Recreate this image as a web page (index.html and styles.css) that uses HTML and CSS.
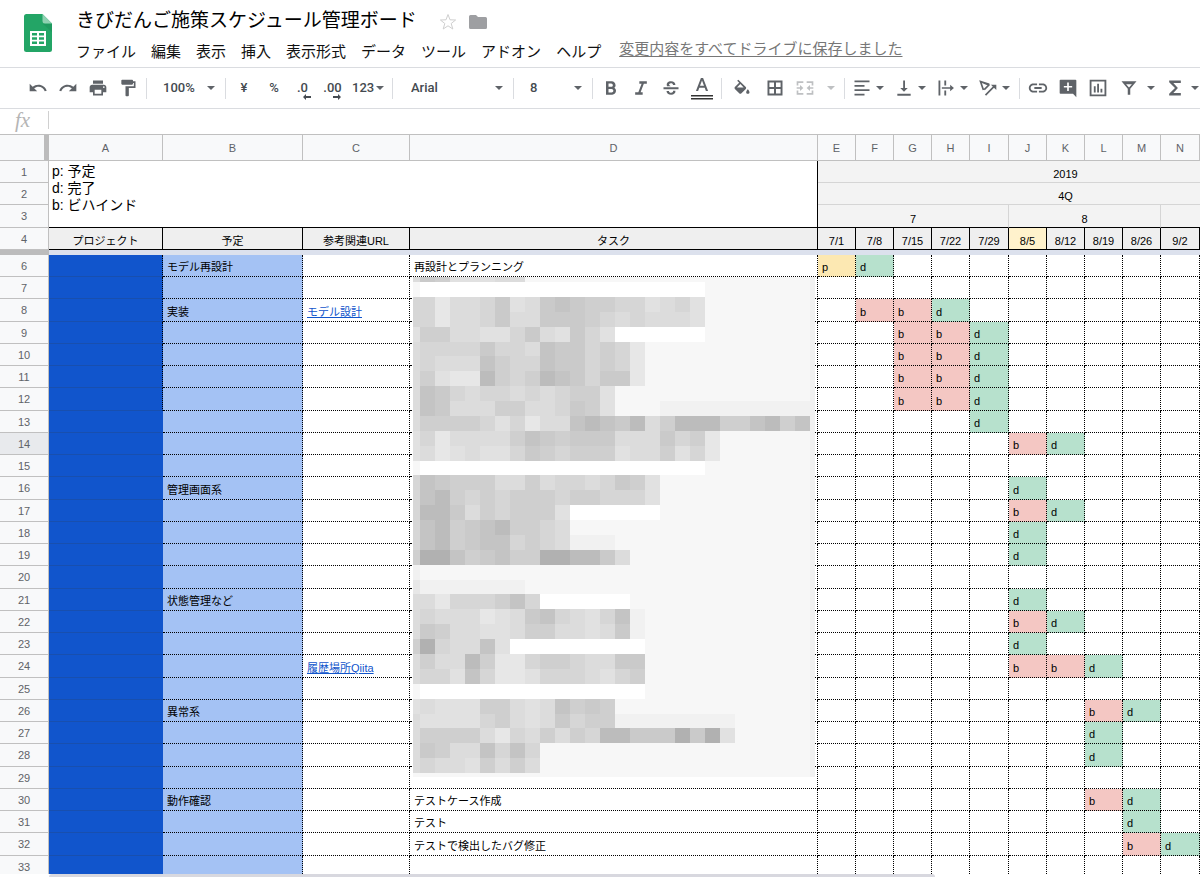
FILE: index.html
```html
<!DOCTYPE html>
<html lang="ja">
<head>
<meta charset="utf-8">
<title>きびだんご施策スケジュール管理ボード</title>
<link rel="stylesheet" href="styles.css">
</head>
<body>
<header class="header">
  <svg class="logo" viewBox="0 0 28 38" aria-hidden="true">
    <path fill="#23a566" d="M2.500 0H18.500L28 9.500V35.500A2.500 2.500 0 0 1 25.500 38H2.500A2.500 2.500 0 0 1 0 35.500V2.500A2.500 2.500 0 0 1 2.500 0z"/>
    <path fill="#1c8f57" d="M19 10l9 8V9.500z" opacity=".5"/>
    <path fill="#8ed1b1" d="M18.500 0L28 9.500H21A2.500 2.500 0 0 1 18.500 7z"/>
    <path fill="#fff" fill-rule="evenodd" d="M6 17H22V32H6zM8 19v2.500h5V19zM15 19v2.500h5V19zM8 23.300v2.500h5v-2.500zM15 23.300v2.500h5v-2.500zM8 27.600v2.500h5v-2.500zM15 27.600v2.500h5v-2.500z"/>
  </svg>
  <div class="heading">
    <div class="title-row">
      <h1 class="title">きびだんご施策スケジュール管理ボード</h1>
      <button class="title-button" aria-label="スター"><svg width="18" height="18" viewBox="0 0 18 18"><path fill="none" stroke="#cfcfcf" d="M9 1.500l2 5.300 5.600.2-4.400 3.500 1.600 5.500L9 12.800 4.200 16l1.600-5.500L1.400 7 7 6.800z"/></svg></button>
      <button class="title-button" aria-label="フォルダ"><svg width="18" height="16" viewBox="0 0 18 16"><path fill="#9e9fa2" d="M1.500 1H7l2 2h7.500A1.500 1.500 0 0 1 18 4.500v9a1.500 1.500 0 0 1-1.500 1.500h-15A1.500 1.500 0 0 1 0 13.500v-11A1.500 1.500 0 0 1 1.500 1z"/></svg></button>
    </div>
    <nav class="menu">
      <button>ファイル</button><button>編集</button><button>表示</button><button>挿入</button><button>表示形式</button><button>データ</button><button>ツール</button><button>アドオン</button><button>ヘルプ</button>
      <a class="saved" href="#">変更内容をすべてドライブに保存しました</a>
    </nav>
  </div>
</header>

<div class="toolbar" role="toolbar">
  <button class="tool" aria-label="元に戻す"><svg class="icon" viewBox="0 0 24 24"><path d="M12.500 8c-2.650 0-5.050.990-6.900 2.600L2 7v9h9l-3.620-3.620c1.390-1.160 3.160-1.880 5.120-1.880 3.540 0 6.550 2.310 7.600 5.500l2.370-.780C21.080 11.030 17.150 8 12.500 8z"/></svg></button>
  <button class="tool" aria-label="やり直し"><svg class="icon" viewBox="0 0 24 24"><path d="M18.400 10.600C16.550 8.990 14.150 8 11.500 8c-4.650 0-8.580 3.030-9.960 7.220L3.900 16c1.050-3.190 4.050-5.500 7.600-5.500 1.950 0 3.730.720 5.120 1.880L13 16h9V7l-3.600 3.600z"/></svg></button>
  <button class="tool" aria-label="印刷"><svg class="icon" viewBox="0 0 24 24"><path d="M19 8H5c-1.660 0-3 1.340-3 3v6h4v4h12v-4h4v-6c0-1.660-1.340-3-3-3zm-3 11H8v-5h8v5zm3-7c-.550 0-1-.450-1-1s.450-1 1-1 1 .450 1 1-.450 1-1 1zm-1-9H6v4h12V3z"/></svg></button>
  <button class="tool" aria-label="書式を貼り付け"><svg class="icon" viewBox="0 0 24 24"><path d="M18 4V3c0-.550-.450-1-1-1H5c-.550 0-1 .450-1 1v4c0 .550.450 1 1 1h12c.550 0 1-.450 1-1V6h1v4H9v11c0 .550.450 1 1 1h2c.550 0 1-.450 1-1v-9h8V4h-3z"/></svg></button>
  <span class="sep"></span>
  <span class="picker"><select aria-label="ズーム"><option>100%</option></select><svg class="arrow" viewBox="0 0 8 4"><path d="M0 0h8L4 4z"/></svg></span>
  <span class="sep"></span>
  <button class="tool">¥</button>
  <button class="tool">%</button>
  <button class="tool decimals">.0<svg viewBox="0 0 8 6"><path d="M3 0v2h5v2H3v2L0 3z"/></svg></button>
  <button class="tool decimals">.00<svg viewBox="0 0 8 6"><path d="M5 0v2H0v2h5v2l3-3z"/></svg></button>
  <button class="tool combo number-format">123<svg class="arrow" viewBox="0 0 8 4"><path d="M0 0h8L4 4z"/></svg></button>
  <span class="sep"></span>
  <span class="picker picker-font"><select aria-label="フォント"><option>Arial</option></select><svg class="arrow" viewBox="0 0 8 4"><path d="M0 0h8L4 4z"/></svg></span>
  <span class="sep"></span>
  <span class="picker"><select aria-label="フォントサイズ"><option>8</option></select><svg class="arrow" viewBox="0 0 8 4"><path d="M0 0h8L4 4z"/></svg></span>
  <span class="sep"></span>
  <button class="tool" aria-label="太字"><svg class="icon" viewBox="0 0 24 24"><path d="M15.800 11.800c1-.7 1.700-1.800 1.700-2.900C17.500 6.200 15.500 4 12.800 4H6v16h7.500c2.500 0 4.500-2.100 4.500-4.600 0-1.600-.9-2.900-2.200-3.600zM9 6.600h3.200c1.100 0 2 .9 2 2s-.9 2-2 2H9zm3.700 10.800H9v-4.200h3.700c1.200 0 2.100.9 2.100 2.100s-.9 2.100-2.100 2.100z"/></svg></button>
  <button class="tool" aria-label="斜体"><svg class="icon" viewBox="0 0 24 24"><path d="M10 4v3h2.700l-3.900 10H5v3h9v-3h-2.500l3.900-10H19V4z"/></svg></button>
  <button class="tool" aria-label="取り消し線"><svg class="icon" viewBox="0 0 24 24"><path d="M3 11h18v2.500H3zM7.200 9.800C6 6.200 8.500 4 12 4c3.200 0 5.300 1.800 5.300 4.500h-2.900C14.400 7.200 13.500 6.400 12 6.400c-2 0-3 1.200-1.900 2.400l1.500 1zM6.600 15.500h2.900c0 1.400 1.100 2.200 2.600 2.200 1.900 0 2.700-1 2.300-2.300H17.300C17.700 18.300 15.500 20.100 12.200 20.100c-3.200 0-5.600-1.700-5.600-4.600z"/></svg></button>
  <button class="tool text-color" aria-label="テキストの色"><svg width="22" height="26" viewBox="0 0 22 26"><path fill="#5f6368" d="M9.900 3h2.200l5 13h-2.200l-1.200-3.300H8.300L7.100 16H4.900zM9 10.800h4L11 5.400z"/><path fill="#333" d="M0 20h22v1.500H0zM0 23h22v1.500H0z"/></svg></button>
  <span class="sep"></span>
  <button class="tool fill-color" aria-label="塗りつぶしの色"><svg class="icon" viewBox="0 0 24 24"><path d="M16.560 8.940L7.620 0 6.210 1.410l2.380 2.380-5.150 5.150c-.590.590-.590 1.540 0 2.120l5.500 5.500c.290.290.680.440 1.060.440s.770-.150 1.060-.440l5.500-5.500c.590-.580.590-1.530 0-2.120zM6 9.500L10 5.300 14 9.500zM19 11.500s-2 2.170-2 3.500c0 1.100.9 2 2 2s2-.9 2-2c0-1.330-2-3.500-2-3.500z" transform="translate(0 2)"/></svg></button>
  <button class="tool borders" aria-label="枠線"><svg class="icon" viewBox="0 0 24 24"><path fill-rule="evenodd" d="M3 3h18v18H3zM5.300 5.300v5.500h5.500V5.300zM13.200 5.300v5.500h5.500V5.300zM5.300 13.200v5.500h5.500v-5.500zM13.200 13.200v5.500h5.500v-5.500z"/></svg></button>
  <button class="tool combo merge" aria-label="セルを結合"><svg class="icon" viewBox="0 0 24 24"><path d="M2 4h8v2H4v3H2zM14 4h8v5h-2V6h-6zM2 15h2v3h6v2H2zM20 15h2v5h-8v-2h6zM2 11h4V8.500l4 3.500-4 3.500V13H2zM22 11h-4V8.500L14 12l4 3.500V13h4z"/></svg><svg class="arrow" viewBox="0 0 8 4"><path d="M0 0h8L4 4z"/></svg></button>
  <span class="sep"></span>
  <button class="tool combo" aria-label="水平方向の配置"><svg class="icon" viewBox="0 0 24 24"><path d="M3 3h18v2.200H3zM3 8.300h12v2.200H3zM3 13.500h18v2.200H3zM3 18.800h12V21H3z"/></svg><svg class="arrow" viewBox="0 0 8 4"><path d="M0 0h8L4 4z"/></svg></button>
  <button class="tool combo" aria-label="垂直方向の配置"><svg class="icon" viewBox="0 0 24 24"><path d="M4 19h16v2.200H4zM11 3h2.200v9h3.300L12 16.500 7.500 12H11z"/></svg><svg class="arrow" viewBox="0 0 8 4"><path d="M0 0h8L4 4z"/></svg></button>
  <button class="tool combo" aria-label="テキストの折り返し"><svg class="icon" viewBox="0 0 24 24"><path d="M3 3h2.200v18H3zM10 3h2.200v6H10zM10 15h2.200v6H10zM7 11h10V8l4.500 4-4.500 4v-3H7z"/></svg><svg class="arrow" viewBox="0 0 8 4"><path d="M0 0h8L4 4z"/></svg></button>
  <button class="tool combo" aria-label="テキストの回転"><svg class="icon" viewBox="0 0 24 24"><path fill="none" stroke="#5f6368" stroke-width="2" d="M6.500 14.500L3 4.200 13.500 7.500M3 4.200L13 8.500 7.500 14M9 20.500L20 9.500"/><path d="M15.500 8H22v6.500z"/></svg><svg class="arrow" viewBox="0 0 8 4"><path d="M0 0h8L4 4z"/></svg></button>
  <span class="sep"></span>
  <button class="tool" aria-label="リンクを挿入"><svg class="icon link-icon" viewBox="0 0 24 24"><path d="M3.900 12c0-1.710 1.390-3.100 3.100-3.100h4V7H7c-2.760 0-5 2.240-5 5s2.240 5 5 5h4v-1.900H7c-1.710 0-3.100-1.390-3.100-3.100zM8 13h8v-2H8v2zm9-6h-4v1.900h4c1.710 0 3.100 1.390 3.100 3.100s-1.390 3.100-3.100 3.100h-4V17h4c2.760 0 5-2.240 5-5s-2.240-5-5-5z"/></svg></button>
  <button class="tool" aria-label="コメントを挿入"><svg class="icon" viewBox="0 0 24 24"><path d="M22 3c0-.6-.4-1-1-1H3c-.6 0-1 .4-1 1v15c0 .6.400 1 1 1h15l4 4V3zm-5 8.500h-4v4h-2v-4H7v-2h4v-4h2v4h4z"/></svg></button>
  <button class="tool" aria-label="グラフを挿入"><svg class="icon" viewBox="0 0 24 24"><path fill-rule="evenodd" d="M2 2h20v20H2zM4.200 4.200v15.600h15.600V4.200zM7 10h2.200v7.500H7zM11 7h2.200v10.500H11zM15 13h2.200v4.500H15z"/></svg></button>
  <button class="tool combo filter" aria-label="フィルタ"><svg class="icon" viewBox="0 0 24 24"><path fill-rule="evenodd" d="M3 4h18l-7.500 9v7h-3v-7zM8.500 7.500L12 11.500l3.500-4z"/></svg><svg class="arrow" viewBox="0 0 8 4"><path d="M0 0h8L4 4z"/></svg></button>
  <button class="tool combo sigma" aria-label="関数"><svg class="icon" viewBox="0 0 24 24"><path d="M19 3H5v2l7 7-7 7v2h14v-3H10l5.500-6L10 6h9z"/></svg><svg class="arrow" viewBox="0 0 8 4"><path d="M0 0h8L4 4z"/></svg></button>
</div>

<div class="formula-bar">
  <label class="fx" for="formula">fx</label>
  <input id="formula" class="formula" type="text">
</div>

<main class="sheet">
  <table class="grid">
    <colgroup>
      <col class="col-head"><col class="col-a"><col class="col-b"><col class="col-c"><col class="col-d">
      <col><col><col><col><col class="wide"><col><col><col><col><col class="wide"><col><col><col>
    </colgroup>
    <thead>
      <tr class="letters"><th class="corner"></th><th>A</th><th>B</th><th>C</th><th>D</th><th>E</th><th>F</th><th>G</th><th>H</th><th>I</th><th>J</th><th>K</th><th>L</th><th>M</th><th>N</th><th></th><th></th><th></th></tr>
      <tr class="frozen"><th>1</th><td class="legend" colspan="4" rowspan="3">p: 予定<br>d: 完了<br>b: ビハインド</td><td class="period" colspan="13">2019</td></tr>
      <tr class="frozen"><th>2</th><td class="period" colspan="13">4Q</td></tr>
      <tr class="frozen months"><th>3</th><td class="period" colspan="5">7</td><td class="period" colspan="4">8</td><td class="period" colspan="4"></td></tr>
      <tr class="frozen names"><th>4</th><td>プロジェクト</td><td>予定</td><td>参考関連URL</td><td>タスク</td><td>7/1</td><td>7/8</td><td>7/15</td><td>7/22</td><td>7/29</td><td class="current">8/5</td><td>8/12</td><td>8/19</td><td>8/26</td><td>9/2</td><td></td><td></td><td></td></tr>
      <tr class="divider"><th></th><td colspan="17"></td></tr>
    </thead>
    <tbody id="rows"></tbody>
  </table>
</main>
<div class="scroll"><div class="thumb"></div></div>
<script src="sheet.js"></script>
</body>
</html>
```
FILE: styles.css
```css
* {
  box-sizing: border-box;
}

body {
  margin: 0;
  height: 100vh;
  display: flex;
  flex-direction: column;
  overflow: hidden;
  background: #fff;
  color: #000;
  font-family: "Liberation Sans", "Noto Sans CJK JP", sans-serif;
}

button {
  padding: 0;
  border: 0;
  background: none;
  color: inherit;
  font: inherit;
}

.header {
  display: flex;
  flex: none;
  height: 68px;
  border-bottom: 1px solid #dadce0;
}

.logo {
  flex: none;
  width: 28px;
  height: 38px;
  margin: 14px 24px 0;
}

.heading {
  white-space: nowrap;
}

.title-row {
  display: flex;
  align-items: center;
  height: 39px;
  padding-top: 5px;
}

.title {
  margin: 0 22px 2px 0;
  font-size: 19px;
  line-height: 28px;
  font-weight: 400;
}

.title-button {
  display: flex;
  margin-right: 12px;
}

.menu {
  display: flex;
  gap: 15px;
  height: 26px;
  font-size: 15px;
  line-height: 26px;
  color: #111;
}

.saved {
  margin-left: 3px;
  line-height: 20px;
  color: #777;
  text-underline-offset: 2px;
}

.toolbar {
  display: flex;
  flex: none;
  align-items: center;
  height: 41px;
  padding-left: 23px;
  border-bottom: 1px solid #dadce0;
  overflow: hidden;
  color: #444a50;
  font: 500 13px/20px Roboto, sans-serif;
}

.tool {
  display: flex;
  flex: none;
  align-items: center;
  justify-content: center;
  position: relative;
  width: 30px;
  height: 30px;
}

.sep {
  flex: none;
  width: 1px;
  height: 21px;
  margin: 0 3px;
  background: #dadce0;
}

.icon {
  flex: none;
  width: 20px;
  height: 20px;
  fill: #5f6368;
}

.link-icon {
  width: 22px;
  height: 22px;
}

.arrow {
  flex: none;
  width: 8px;
  height: 4px;
  fill: #5f6368;
}

.picker {
  display: flex;
  flex: none;
  align-items: center;
  position: relative;
  width: 72px;
}

.picker-font {
  width: 114px;
}

.picker select {
  width: 100%;
  height: 30px;
  padding: 0 20px 1px 13px;
  border: 0;
  appearance: none;
  background: none;
  color: inherit;
  font: inherit;
}

.picker-font select {
  padding-left: 15px;
}

.picker .arrow {
  position: absolute;
  right: 7px;
}

.decimals {
  padding-right: 3px;
}

.decimals svg {
  position: absolute;
  right: 8px;
  bottom: 3px;
  width: 8px;
  height: 6px;
  fill: #444a50;
}

.combo {
  justify-content: space-between;
  width: 42px;
  padding: 0 6px 0 4px;
}

.number-format {
  width: 40px;
  padding: 0 5px 0 3px;
}

.text-color {
  width: 32px;
}

.fill-color {
  width: 34px;
}

.borders {
  width: 32px;
}

.merge {
  width: 50px;
  opacity: 0.4;
}

.filter {
  width: 46px;
  padding: 0 4px 0 6px;
}

.sigma {
  width: 46px;
  padding: 0 6px;
}

.formula-bar {
  display: flex;
  flex: none;
  align-items: center;
  height: 26px;
  border-bottom: 1px solid #c0c0c0;
}

.fx {
  width: 49px;
  margin-bottom: 3px;
  padding-left: 15px;
  border-right: 1px solid #d0d0d0;
  color: #b5b5b5;
  font: italic 21px/18px "Liberation Serif", serif;
}

.formula {
  flex: 1;
  min-width: 0;
  height: 24px;
  padding: 0 6px;
  border: 0;
  outline: 0;
}

.sheet {
  flex: 1;
  min-height: 0;
  overflow: hidden;
}

.grid {
  width: 0;
  table-layout: fixed;
  border-collapse: separate;
  border-spacing: 0;
  font-size: 11px;
  line-height: 16px;
}

.grid col { width: 38px; }
.grid .wide { width: 39px; }
.grid .col-head { width: 49px; }
.grid .col-a { width: 114px; }
.grid .col-b { width: 140px; }
.grid .col-c { width: 107px; }
.grid .col-d { width: 408px; }

.grid th {
  padding: 0;
  border-right: 1px solid #c0c0c0;
  border-bottom: 1px solid #c0c0c0;
  background: #f8f9fa;
  color: #5f6368;
  font-weight: 400;
}

.grid td {
  padding: 0 3px;
  vertical-align: bottom;
  white-space: nowrap;
}

.letters {
  height: 26px;
}

.grid .corner {
  border-right: 5px solid #bcbcbc;
}

.frozen {
  height: 22px;
}

.months {
  height: 23px;
}

.grid .legend {
  padding-top: 2px;
  border-right: 1px solid #000;
  border-bottom: 1px solid #000;
  vertical-align: top;
  font-size: 14px;
  line-height: 17px;
}

.grid .period {
  border-right: 1px solid #d5d5d5;
  border-bottom: 1px solid #d5d5d5;
  background: #f3f3f3;
  text-align: center;
}

.months .period {
  border-bottom-color: #000;
}

.names td {
  border-right: 1px solid #000;
  border-bottom: 1px solid #000;
  background: #efefef;
  text-align: center;
}

.names td.current {
  background: #fff2cc;
}

.divider {
  height: 5px;
  line-height: 0;
}

.divider th {
  border: 0;
  background: #bcbcbc;
}

.divider td {
  background: #dce1ed;
}

.row {
  height: 22px;
}

.row:nth-child(4n + 3) {
  height: 23px;
}

.row th.selected {
  background: #e8eaed;
}

.row td {
  padding: 0 4px 1px;
  border-right: 1px dotted #000;
  border-bottom: 1px dotted #000;
}

.row td.project {
  border-right: 1px solid #1155cc;
  border-bottom: 1px solid #184fae;
  background: #1155cc;
}

.row td.project-edge {
  border-right: 1px dotted #000;
}

.row td.plan {
  background: #a4c2f4;
}

.row a {
  color: #1155cc;
}

.row td.p { background: #fce8b2; }
.row td.b { background: #f4c7c3; }
.row td.d { background: #b7e1cd; }

.row td.masked {
  position: relative;
}

.mosaic {
  position: absolute;
  z-index: 1;
  top: 0;
  left: 3px;
  width: 402px;
  height: 500px;
}

.scroll {
  flex: none;
  height: 3px;
  padding-left: 49px;
  background: #fff;
}

.thumb {
  width: 77%;
  height: 3px;
  border-radius: 3px 3px 0 0;
  background: #d8d8df;
}
```
FILE: sheet.js
```js
const FIRST_ROW = 6;
const LAST_ROW = 33;
const SELECTED_ROW = 14;
const WEEKS = 13;

const plans = { 6: "モデル再設計", 8: "実装", 16: "管理画面系", 21: "状態管理など", 26: "異常系", 30: "動作確認" };
const links = { 8: "モデル設計", 24: "履歴場所Qiita" };
const tasks = { 6: "再設計とプランニング", 30: "テストケース作成", 31: "テスト", 32: "テストで検出したバグ修正" };

// Weekly status marks: one character per week, starting at column E.
const marks = {
  6: "pd", 8: " bbd", 9: "  bbd", 10: "  bbd", 11: "  bbd", 12: "  bbd", 13: "    d",
  14: "     bd", 16: "     d", 17: "     bd", 18: "     d", 19: "     d",
  21: "     d", 22: "     bd", 23: "     d", 24: "     bbd",
  26: "       bd", 27: "       d", 28: "       d",
  30: "       bd", 31: "        d", 32: "        bd"
};

// Masked task names: one string per band, each digit an index into shades.
const shades = ["#fff", "#f7f7f7", "#f1f1f1", "#e7e7e7", "#e1e1e1", "#dcdcdc", "#d6d6d6", "#cfcfcf", "#cacaca", "#c4c4c4", "#bcbcbc", "#b1b1b1"];
const bands = [
  "58744455", "10000000000000000000", "66355684589877664564", "66355685588876565554",
  "47755446854864000000", "5666686659886763", "5655597669886763", "57433a767a986883",
  "59865665656774", "598555775568741112222222222", "577776463559a98a57aaa779a79",
  "463555579878885558673", "453454468767774557463", "100000000000000000001",
  "69877755756656874", "69a76767776776664", "6aa85767774000000", "69a789a7765",
  "69a78996765222", "7bb978977bbaa85", "2", "32222222", "553666796000000",
  "5655534589654692", "5875544577554582", "7b65594000000000", "5755a73367765588",
  "5664963346665467", "1000000000000000", "45444775459787", "5444467545867722222222",
  "5777753657576aa888b8b4", "587559696", "565547575", "1"
];

function mosaic() {
  const colX = i => (i === 0 ? 0 : Math.min(7 + 15 * (i - 1), 402));
  const rowY = i => (i === 0 ? 0 : Math.min(Math.round(5 + 14.88 * (i - 1)), 500));
  let rects = "";
  bands.forEach((band, r) => {
    const cells = band.padEnd(27, "1") + "2";
    for (let c = 0; c < 28; c++) {
      rects += `<rect x="${colX(c)}" y="${rowY(r)}" width="${colX(c + 1) - colX(c)}" height="${rowY(r + 1) - rowY(r)}" fill="${shades[parseInt(cells[c], 16)]}"/>`;
    }
  });
  return `<svg class="mosaic" viewBox="0 0 402 500" shape-rendering="crispEdges" aria-hidden="true">${rects}</svg>`;
}

let html = "";
for (let n = FIRST_ROW; n <= LAST_ROW; n++) {
  const weeks = (marks[n] || "").padEnd(WEEKS, " ");
  html += `<tr class="row"><th${n === SELECTED_ROW ? ' class="selected"' : ""}>${n}</th>`;
  html += `<td class="project${n <= 12 ? " project-edge" : ""}"></td>`;
  html += `<td class="plan">${plans[n] || ""}</td>`;
  html += `<td>${links[n] ? `<a href="#">${links[n]}</a>` : ""}</td>`;
  html += n === 7 ? `<td class="masked">${mosaic()}</td>` : `<td>${tasks[n] || ""}</td>`;
  for (const m of weeks) {
    html += m === " " ? "<td></td>" : `<td class="${m}">${m}</td>`;
  }
  html += "</tr>";
}
document.getElementById("rows").innerHTML = html;
```
